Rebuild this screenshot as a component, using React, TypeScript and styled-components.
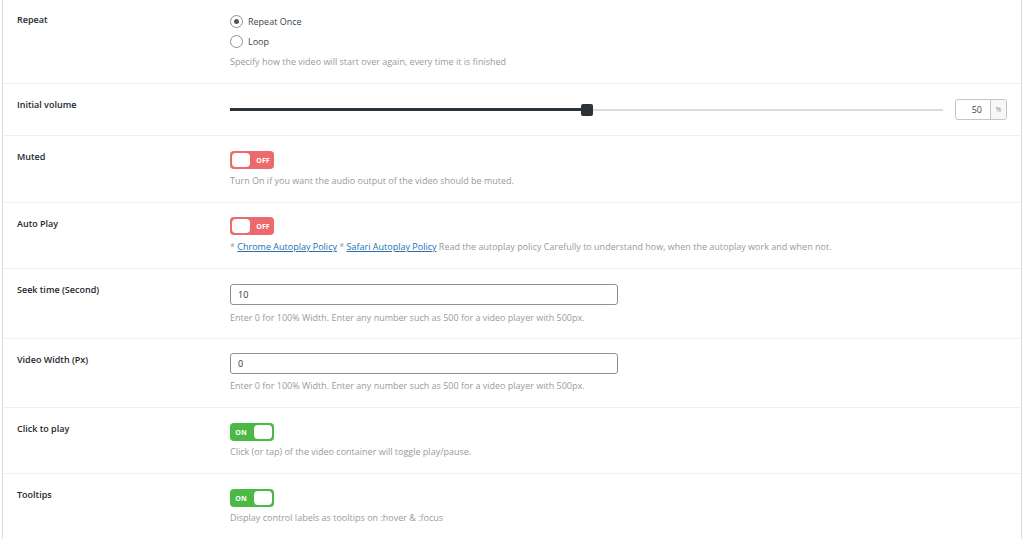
import React from "react";
import styled, { createGlobalStyle } from "styled-components";

const Global = createGlobalStyle`
  html, body { margin: 0; padding: 0; background: #fff; }
  body { font-family: "Open Sans", "Liberation Sans", sans-serif; color: #1d2327; }
`;

const Panel = styled.div`
  margin-left: 2px;
  width: 1018px;
  height: 539px;
  border-left: 1px solid #dcdcde;
  border-right: 1px solid #dcdcde;
  overflow: hidden;
  background: #fff;
`;

const Row = styled.div<{ $pt?: number; $pb?: number }>`
  display: grid;
  grid-template-columns: 227px 1fr;
  padding: ${(p) => p.$pt ?? 15}px 14px ${(p) => p.$pb ?? 14}px 0;
  border-bottom: 1px solid #f0f0f1;
`;

const Label = styled.div<{ $pt?: number }>`
  padding-left: 14px;
  padding-top: ${(p) => p.$pt ?? 0}px;
  font-size: 9px;
  line-height: 12px;
  font-weight: 600;
  color: #23282d;
`;

const Control = styled.div`
  display: flex;
  flex-direction: column;
  align-items: flex-start;
`;

const Desc = styled.div<{ $mt?: number }>`
  margin-top: ${(p) => p.$mt ?? 6}px;
  font-size: 9px;
  line-height: 12px;
  color: #9a9a9a;
  a { color: #2271b1; text-decoration: underline; }
`;

const RadioRow = styled.label`
  display: flex;
  align-items: center;
  gap: 5px;
  height: 20px;
  font-size: 9px;
  color: #3c434a;
`;

const RadioDot = styled.span<{ $on?: boolean }>`
  width: 11px;
  height: 11px;
  border-radius: 50%;
  border: 1px solid #8c8f94;
  display: flex;
  align-items: center;
  justify-content: center;
  &::after {
    content: "";
    width: 5px;
    height: 5px;
    border-radius: 50%;
    background: ${(p) => (p.$on ? "#50575e" : "transparent")};
  }
`;

const Toggle = styled.div<{ $on?: boolean }>`
  width: 44px;
  height: 18px;
  box-sizing: border-box;
  border-radius: 4px;
  background: ${(p) => (p.$on ? "#4cb944" : "#ec6a6d")};
  display: flex;
  flex-direction: ${(p) => (p.$on ? "row-reverse" : "row")};
  align-items: center;
  padding: 0 2px;
  gap: 4px;
`;

const Knob = styled.span`
  width: 18px;
  height: 14px;
  border-radius: 4px;
  background: #fff;
`;

const ToggleText = styled.span`
  font-size: 7px;
  font-weight: 700;
  color: #fff;
  flex: 1;
  text-align: center;
`;

const SliderWrap = styled.div`
  display: flex;
  align-items: center;
  gap: 12px;
  width: 100%;
`;

const Track = styled.div`
  position: relative;
  flex: 1;
  height: 2px;
  background: #dcdcde;
`;

const Fill = styled.div`
  position: absolute;
  left: 0;
  top: -0.5px;
  height: 3px;
  background: #2c3338;
`;

const Thumb = styled.div`
  position: absolute;
  top: -5px;
  width: 12px;
  height: 12px;
  margin-left: -6px;
  border-radius: 2px;
  background: #2c3338;
`;

const NumBox = styled.div`
  display: flex;
  width: 52px;
  height: 21px;
  box-sizing: border-box;
  border: 1px solid #c3c4c7;
  border-radius: 3px;
  overflow: hidden;
`;

const NumValue = styled.div`
  flex: 1;
  display: flex;
  align-items: center;
  justify-content: flex-end;
  padding-right: 8px;
  font-size: 9px;
  color: #3c434a;
`;

const NumUnit = styled.div`
  width: 15px;
  border-left: 1px solid #c3c4c7;
  background: #f6f7f7;
  display: flex;
  align-items: center;
  justify-content: center;
  font-size: 7px;
  color: #8c8f94;
`;

const TextInput = styled.div`
  width: 388px;
  height: 21px;
  box-sizing: border-box;
  border: 1px solid #8c8f94;
  border-radius: 3px;
  display: flex;
  align-items: center;
  padding-left: 7px;
  font-size: 9px;
  color: #2c3338;
`;

export default function App() {
  const volume = 50;
  return (
    <>
      <Global />
      <Panel>
        <Row $pt={11} $pb={15}>
          <Label $pt={3}>Repeat</Label>
          <Control>
            <RadioRow>
              <RadioDot $on />
              Repeat Once
            </RadioRow>
            <RadioRow>
              <RadioDot />
              Loop
            </RadioRow>
            <Desc $mt={5}>Specify how the video will start over again, every time it is finished</Desc>
          </Control>
        </Row>

        <Row $pt={15} $pb={15}>
          <Label>Initial volume</Label>
          <Control>
            <SliderWrap>
              <Track>
                <Fill style={{ width: `${volume}%` }} />
                <Thumb style={{ left: `${volume}%` }} />
              </Track>
              <NumBox>
                <NumValue>50</NumValue>
                <NumUnit>%</NumUnit>
              </NumBox>
            </SliderWrap>
          </Control>
        </Row>

        <Row $pt={15} $pb={15}>
          <Label>Muted</Label>
          <Control>
            <Toggle>
              <Knob />
              <ToggleText>OFF</ToggleText>
            </Toggle>
            <Desc>Turn On if you want the audio output of the video should be muted.</Desc>
          </Control>
        </Row>

        <Row $pt={14} $pb={15}>
          <Label $pt={1}>Auto Play</Label>
          <Control>
            <Toggle>
              <Knob />
              <ToggleText>OFF</ToggleText>
            </Toggle>
            <Desc>
              * <a href="#">Chrome Autoplay Policy</a> * <a href="#">Safari Autoplay Policy</a> Read the
              autoplay policy Carefully to understand how, when the autoplay work and when not.
            </Desc>
          </Control>
        </Row>

        <Row $pt={15} $pb={14}>
          <Label>Seek time (Second)</Label>
          <Control>
            <TextInput>10</TextInput>
            <Desc $mt={7}>
              Enter 0 for 100% Width. Enter any number such as 500 for a video player with 500px.
            </Desc>
          </Control>
        </Row>

        <Row $pt={14} $pb={15}>
          <Label $pt={1}>Video Width (Px)</Label>
          <Control>
            <TextInput>0</TextInput>
            <Desc $mt={6}>
              Enter 0 for 100% Width. Enter any number such as 500 for a video player with 500px.
            </Desc>
          </Control>
        </Row>

        <Row $pt={15} $pb={15}>
          <Label>Click to play</Label>
          <Control>
            <Toggle $on>
              <Knob />
              <ToggleText>ON</ToggleText>
            </Toggle>
            <Desc $mt={5}>Click (or tap) of the video container will toggle play/pause.</Desc>
          </Control>
        </Row>

        <Row $pt={15} $pb={15}>
          <Label>Tooltips</Label>
          <Control>
            <Toggle $on>
              <Knob />
              <ToggleText>ON</ToggleText>
            </Toggle>
            <Desc $mt={5}>Display control labels as tooltips on :hover &amp; :focus</Desc>
          </Control>
        </Row>
      </Panel>
    </>
  );
}
